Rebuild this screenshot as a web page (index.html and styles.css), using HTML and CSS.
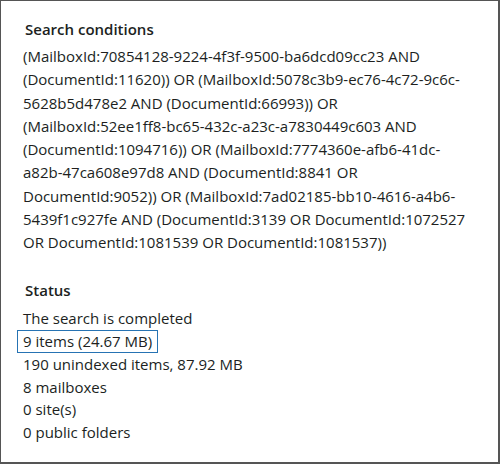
FILE: index.html
```html
<!DOCTYPE html>
<html>
<head>
<meta charset="utf-8">
<link rel="stylesheet" href="styles.css">
</head>
<body>
<div class="frame">
  <section class="section conditions">
    <h2 class="heading">Search conditions</h2>
    <p class="query">(MailboxId:70854128-9224-4f3f-9500-ba6dcd09cc23 AND (DocumentId:11620)) OR (MailboxId:5078c3b9-ec76-4c72-9c6c-5628b5d478e2 AND (DocumentId:66993)) OR (MailboxId:52ee1ff8-bc65-432c-a23c-a7830449c603 AND (DocumentId:1094716)) OR (MailboxId:7774360e-afb6-41dc-a82b-47ca608e97d8 AND (DocumentId:8841 OR DocumentId:9052)) OR (MailboxId:7ad02185-bb10-4616-a4b6-5439f1c927fe AND (DocumentId:3139 OR DocumentId:1072527 OR DocumentId:1081539 OR DocumentId:1081537))</p>
  </section>
  <section class="section status">
    <h2 class="heading">Status</h2>
    <ul class="status-list">
      <li>The search is completed</li>
      <li><span class="highlight">9 items (24.67 MB)</span></li>
      <li>190 unindexed items, 87.92 MB</li>
      <li>8 mailboxes</li>
      <li>0 site(s)</li>
      <li>0 public folders</li>
    </ul>
  </section>
</div>
</body>
</html>
```
FILE: styles.css
```css
html, body {
  margin: 0;
  padding: 0;
  background: #fff;
}
body {
  font-family: "Open Sans", "Noto Sans", sans-serif;
  color: #201f1e;
}
.frame {
  box-sizing: border-box;
  width: 500px;
  height: 464px;
  border-top: 1px solid #555;
  border-left: 1px solid #555;
  border-right: 2px solid #555;
  border-bottom: 2px solid #555;
  padding: 16px 24px 0 22px;
}
.heading {
  margin: 0 0 0 2px;
  font-size: 15px;
  font-weight: 600;
  line-height: 24px;
}
.conditions .heading {
  margin-bottom: 4px;
}
.query {
  margin: 0;
  font-size: 15px;
  line-height: 23.25px;
}
.status {
  margin-top: 24px;
}
.status .heading {
  margin-bottom: 5px;
}
.status-list {
  list-style: none;
  margin: 0;
  padding: 0;
  font-size: 15px;
  line-height: 22.7px;
}
.highlight {
  display: inline-block;
  margin-left: -6px;
  padding: 0 5px 0 5px;
  border: 1px solid #2673b3;
  line-height: 21px;
}
```
